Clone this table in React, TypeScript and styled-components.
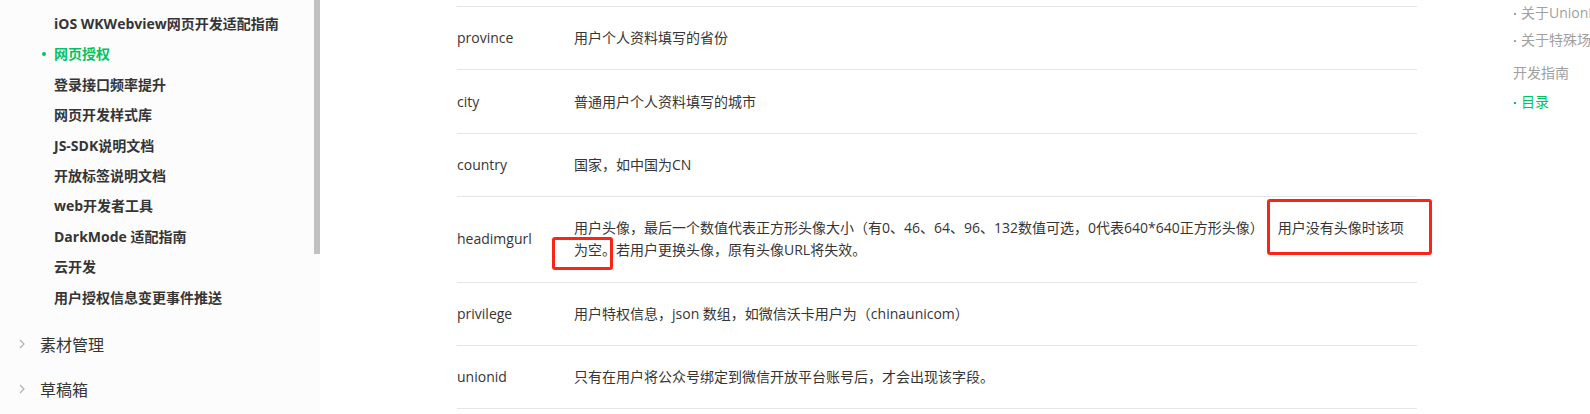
import styled, { createGlobalStyle } from 'styled-components';

const GlobalStyle = createGlobalStyle`
  html, body {
    margin: 0;
    padding: 0;
    background: #ffffff;
  }
  body {
    font-family: "Open Sans", "Noto Sans CJK SC", sans-serif;
    color: #353535;
    overflow: hidden;
  }
`;

const Page = styled.div`
  display: flex;
  width: 1590px;
  height: 414px;
  overflow: hidden;
`;

const Sidebar = styled.aside`
  display: flex;
  width: 320px;
  flex-shrink: 0;
  background: #fcfcfc;
`;

const NavList = styled.ul`
  flex: 1;
  list-style: none;
  margin: 0;
  padding: 9px 0 0 0;
`;

const SubItem = styled.li<{ $active?: boolean }>`
  position: relative;
  padding-left: 54px;
  font-size: 14px;
  font-weight: 700;
  line-height: 30.4px;
  white-space: nowrap;
  color: ${(p) => (p.$active ? '#07c160' : '#353535')};

  ${(p) =>
    p.$active &&
    `
    &::before {
      content: '';
      position: absolute;
      left: 42px;
      top: 13px;
      width: 4px;
      height: 4px;
      border-radius: 50%;
      background: #07c160;
    }
  `}
`;

const GroupItem = styled.li<{ $first?: boolean }>`
  display: flex;
  align-items: center;
  gap: 12px;
  padding-left: 16px;
  margin-top: ${(p) => (p.$first ? '16px' : '15px')};
  font-family: "Noto Sans CJK SC", sans-serif;
  font-size: 16px;
  line-height: 30px;
  color: #353535;
`;

const Chevron = styled.svg`
  width: 12px;
  height: 12px;
  flex-shrink: 0;
`;

const ScrollTrack = styled.div`
  width: 6px;
  display: flex;
  flex-direction: column;
`;

const ScrollThumb = styled.div`
  height: 254px;
  background: #c1c1c1;
`;

const Main = styled.main`
  width: 1193px;
  flex-shrink: 0;
  padding: 6px 0 0 137px;
  box-sizing: border-box;
`;

const Table = styled.div`
  width: 960px;
  border-top: 1px solid #e5e5e5;
`;

const Row = styled.div`
  display: flex;
  border-bottom: 1px solid #e5e5e5;
  padding: 20.2px 0;
  font-size: 14px;
  line-height: 22px;
`;

const NameCell = styled.div`
  width: 117px;
  flex-shrink: 0;
  display: flex;
  align-items: center;
  color: #353535;
`;

const DescCell = styled.div`
  position: relative;
  flex: 1;
  color: #353535;
`;

const Tail = styled.span`
  margin-left: 14px;
`;

const Mark = styled.span<{ $left: number; $top: number; $w: number; $h: number }>`
  position: absolute;
  left: ${(p) => p.$left}px;
  top: ${(p) => p.$top}px;
  width: ${(p) => p.$w}px;
  height: ${(p) => p.$h}px;
  box-sizing: border-box;
  border: 3px solid #fa2419;
  border-radius: 3px;
  pointer-events: none;
`;

const Toc = styled.nav`
  flex: 1;
  overflow: hidden;
  padding-top: 1px;
  font-size: 14px;
  white-space: nowrap;
`;

const TocItem = styled.div<{ $bullet?: boolean; $active?: boolean; $gap?: number }>`
  position: relative;
  line-height: 24px;
  margin-bottom: ${(p) => p.$gap ?? 3}px;
  padding-left: ${(p) => (p.$bullet ? 8 : 0)}px;
  color: ${(p) => (p.$active ? '#07c160' : '#a0a0a0')};

  ${(p) =>
    p.$bullet &&
    `
    &::before {
      content: '';
      position: absolute;
      left: 1px;
      top: 12px;
      width: 2px;
      height: 2px;
      background: currentColor;
    }
  `}
`;

const rows = [
  { name: 'province', desc: '用户个人资料填写的省份' },
  { name: 'city', desc: '普通用户个人资料填写的城市' },
  { name: 'country', desc: '国家，如中国为CN' },
  {
    name: 'headimgurl',
    desc: (
      <>
        用户头像，最后一个数值代表正方形头像大小（有0、46、64、96、132数值可选，0代表640*640正方形头像）
        <Tail>用户没有头像时该项</Tail>
        <br />
        为空。若用户更换头像，原有头像URL将失效。
        <Mark $left={-22} $top={20} $w={61} $h={33} />
        <Mark $left={693} $top={-18} $w={165} $h={56} />
      </>
    ),
  },
  { name: 'privilege', desc: '用户特权信息，json 数组，如微信沃卡用户为（chinaunicom）' },
  { name: 'unionid', desc: '只有在用户将公众号绑定到微信开放平台账号后，才会出现该字段。' },
];

const subItems = [
  'iOS WKWebview网页开发适配指南',
  '网页授权',
  '登录接口频率提升',
  '网页开发样式库',
  'JS-SDK说明文档',
  '开放标签说明文档',
  'web开发者工具',
  'DarkMode 适配指南',
  '云开发',
  '用户授权信息变更事件推送',
];

const ChevronIcon = () => (
  <Chevron viewBox="0 0 12 12">
    <polyline points="4,2 8,6 4,10" fill="none" stroke="#b2b2b2" strokeWidth="1.2" />
  </Chevron>
);

export default function App() {
  return (
    <>
      <GlobalStyle />
      <Page>
        <Sidebar>
          <NavList>
            {subItems.map((t) => (
              <SubItem key={t} $active={t === '网页授权'}>
                {t}
              </SubItem>
            ))}
            <GroupItem $first>
              <ChevronIcon />
              素材管理
            </GroupItem>
            <GroupItem>
              <ChevronIcon />
              草稿箱
            </GroupItem>
          </NavList>
          <ScrollTrack>
            <ScrollThumb />
          </ScrollTrack>
        </Sidebar>
        <Main>
          <Table>
            {rows.map((r) => (
              <Row key={r.name}>
                <NameCell>{r.name}</NameCell>
                <DescCell>{r.desc}</DescCell>
              </Row>
            ))}
          </Table>
        </Main>
        <Toc>
          <TocItem $bullet>关于UnionID机制</TocItem>
          <TocItem $bullet $gap={9}>关于特殊场景下的静默授权</TocItem>
          <TocItem $gap={5}>开发指南</TocItem>
          <TocItem $bullet $active>目录</TocItem>
        </Toc>
      </Page>
    </>
  );
}
